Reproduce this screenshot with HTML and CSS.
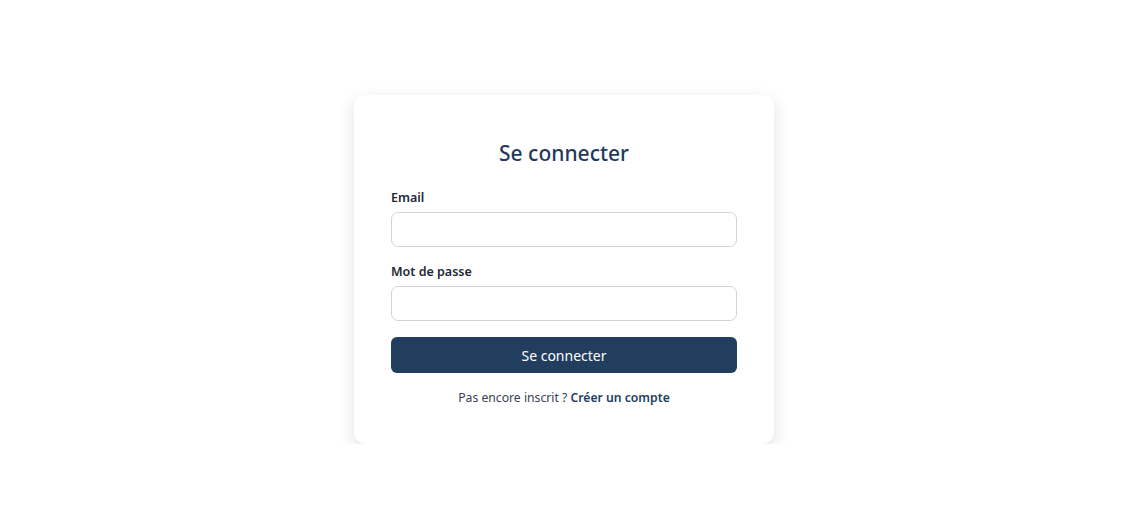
FILE: index.html
```html
<!DOCTYPE html>
<html lang="fr">
<head>
<meta charset="utf-8">
<title>Se connecter</title>
<link rel="stylesheet" href="styles.css">
</head>
<body>
<main class="page">
  <form class="card">
    <h1 class="title">Se connecter</h1>
    <div class="field">
      <label class="label" for="email">Email</label>
      <input class="input" id="email" type="email">
    </div>
    <div class="field">
      <label class="label" for="pwd">Mot de passe</label>
      <input class="input" id="pwd" type="password">
    </div>
    <button class="btn" type="button">Se connecter</button>
    <p class="footer">Pas encore inscrit ? <a class="link" href="#">Créer un compte</a></p>
  </form>
</main>
</body>
</html>
```
FILE: styles.css
```css
* { box-sizing: border-box; }
html, body { margin: 0; padding: 0; background: #fff; }
body { font-family: "Noto Sans", "Open Sans", sans-serif; color: #1f2937; }
.page {
  display: flex;
  justify-content: center;
  padding-top: 95px;
  padding-right: 2px;
}
.card {
  width: 420px;
  background: #fff;
  border-radius: 12px;
  box-shadow: 0 6px 18px rgba(0, 0, 0, 0.12);
  padding: 40px 37px 37px;
  display: flex;
  flex-direction: column;
}
.title {
  margin: 0 0 18px;
  text-align: center;
  font-size: 21px;
  font-weight: 500;
  color: #1f3a5c;
  line-height: 36px;
}
.field {
  display: flex;
  flex-direction: column;
  margin-bottom: 16px;
}
.label {
  font-size: 12.5px;
  font-weight: 600;
  color: #1f2937;
  line-height: 18px;
  margin-bottom: 5px;
}
.input {
  height: 35px;
  border: 1px solid #d1d5db;
  border-radius: 7px;
  background: #fff;
  font: inherit;
}
.btn {
  height: 36px;
  border: none;
  border-radius: 6px;
  background: #223e5f;
  color: #fff;
  font-family: inherit;
  font-size: 14px;
}
.footer {
  margin: 16px 0 0;
  text-align: center;
  font-size: 12.2px;
  color: #374151;
  line-height: 18px;
}
.link {
  color: #223e5f;
  font-weight: 600;
  text-decoration: none;
}
```
